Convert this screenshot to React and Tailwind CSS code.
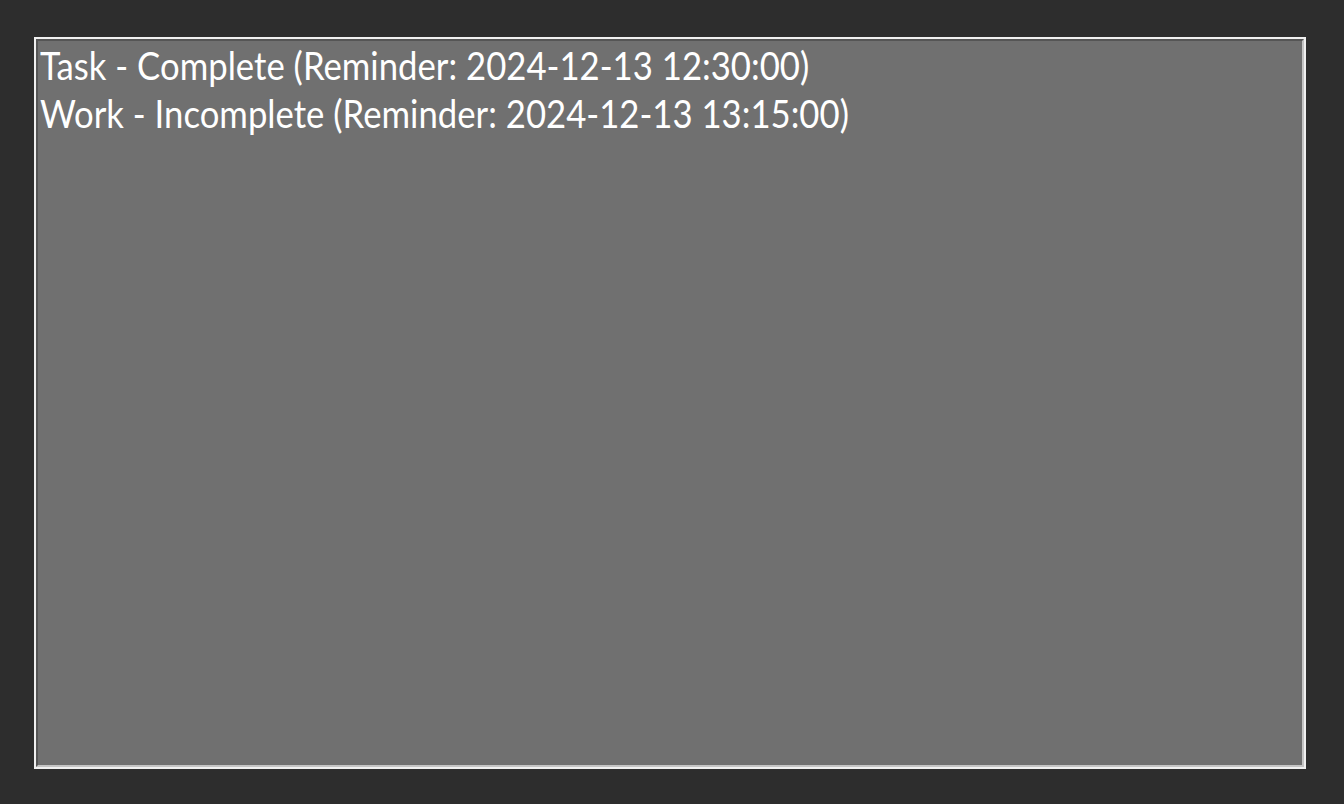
export default function App() {
  const items = [
    "Task - Complete (Reminder: 2024-12-13 12:30:00)",
    "Work - Incomplete (Reminder: 2024-12-13 13:15:00)",
  ];
  return (
    <div className="w-[1344px] h-[804px] bg-[#2d2d2d] pt-[37px] pl-[34px]">
      <div className="w-[1272px] h-[732px] border-2 border-[#f0f0f0]">
        <div className="w-full h-full border-2 border-t-[#555555] border-l-[#555555] border-b-[#c4c4c4] border-r-[#c4c4c4] bg-[#707070] pl-[2px]">
          {items.map((t) => (
            <div
              key={t}
              className="text-white text-[39px] leading-[48px] whitespace-nowrap origin-left scale-x-[0.89]"
              style={{ fontFamily: "Lato, sans-serif" }}
            >
              {t}
            </div>
          ))}
        </div>
      </div>
    </div>
  );
}
